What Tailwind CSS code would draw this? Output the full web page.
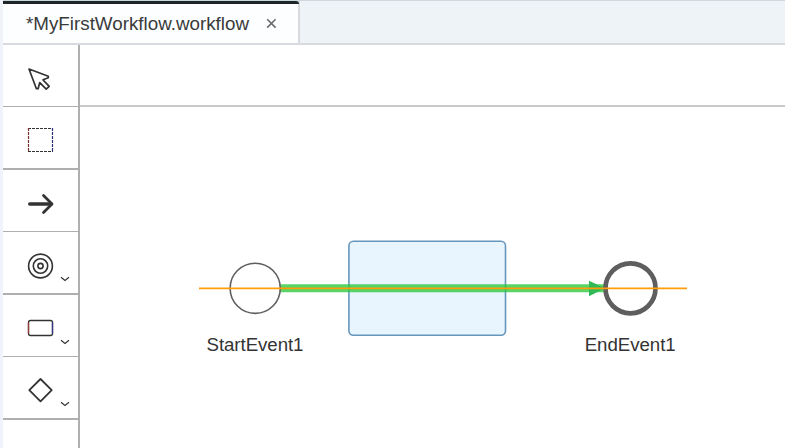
<!DOCTYPE html>
<html lang="en">
<head>
<meta charset="utf-8">
<title>Workflow editor</title>
<script src="https://cdn.jsdelivr.net/npm/@tailwindcss/browser@4"></script>
</head>
<body class="flex h-[448px] w-[785px] flex-col overflow-hidden bg-[#f0f3fa] pl-[3px] font-['Liberation_Sans',Arial,sans-serif] text-[#3a3a3a]">
  <header class="flex h-[45px] shrink-0 border-b-2 border-[#d8dadf] bg-[#edf3f7]">
    <div class="flex w-[297px] flex-col border-t border-r-2 border-t-[#c9d8dc] border-r-[#d8dadf] bg-[#fcfeff]">
      <div class="h-[3px] w-[296px] rounded-tr-sm bg-[#1d2529]"></div>
      <div class="flex flex-1 items-center pl-[23px]">
        <span class="w-[224px] text-[18.8px] leading-[39px] whitespace-nowrap">*MyFirstWorkflow.workflow</span>
        <svg class="ml-[16px]" width="11" height="11" viewBox="0 0 11 11" fill="none" stroke="#6b6b6b" stroke-width="1.6"><path d="M1.2 1.2l8.4 8.4M9.6 1.2l-8.4 8.4"/></svg>
      </div>
    </div>
    <div class="flex-1 border-t border-[#d0d8df]"></div>
  </header>
  <main class="flex min-h-0 flex-1 bg-white">
    <nav class="flex w-[77px] shrink-0 flex-col border-r-2 border-[#afafaf]">
      <button class="h-[62px] border-b border-[#afafaf]"><svg width="75" height="61" viewBox="3 45 75 61" fill="none" stroke="#333" stroke-width="1.7" stroke-linejoin="round"><path d="M29 69L48.3 76.3V77.8L43 79.8L49.2 86.3L46.2 89.2L39.8 82.6L38.1 88.7H36.4Z"/></svg></button>
      <button class="h-[63px] border-b-2 border-[#afafaf]"><svg width="75" height="61" viewBox="3 107 75 61" fill="none" stroke-width="1.2" stroke-dasharray="3 1"><path stroke="#333" d="M28 128.5H53M28 151.5H53"/><path stroke="#7b302e" d="M28.5 128V152"/><path stroke="#2c2c83" d="M52.5 128V152"/></svg></button>
      <button class="h-[62px] border-b border-[#afafaf]"><svg width="75" height="61" viewBox="3 170 75 61" fill="none" stroke="#333" stroke-linecap="round" stroke-linejoin="round"><path stroke-width="3.6" d="M29.8 204H51"/><path stroke-width="2.8" d="M43.5 195.5L52 204L43.5 212.5"/></svg></button>
      <button class="h-[63px] border-b-2 border-[#afafaf]"><svg width="75" height="61" viewBox="3 232 75 61" fill="none" stroke="#333" stroke-width="1.6"><circle cx="40.5" cy="266" r="11.9"/><circle cx="40.5" cy="266" r="7.2"/><circle cx="40.5" cy="266" r="2.6"/><path stroke-width="1.2" d="M61 277.3L65 280.5L69 277.3"/></svg></button>
      <button class="h-[62px] border-b border-[#afafaf]"><svg width="75" height="61" viewBox="3 295 75 61" fill="none" stroke="#333" stroke-width="1.3"><rect x="28.5" y="320.5" width="24" height="15" rx="2"/><path stroke="#913932" d="M28.5 322.5V333.5"/><path stroke="#353187" d="M52.5 322.5V333.5"/><path stroke-width="1.2" d="M61 340.3L65 343.5L69 340.3"/></svg></button>
      <button class="h-[63px] border-b-2 border-[#afafaf]"><svg width="75" height="61" viewBox="3 357 75 61" fill="none" stroke="#333"><path stroke-width="1.8" stroke-linejoin="round" d="M40.5 379L51.7 390.2L40.5 401.4L29.3 390.2Z"/><path stroke-width="1.2" d="M61 402.3L65 405.5L69 402.3"/></svg></button>
    </nav>
    <section class="flex min-w-0 flex-1 flex-col">
      <div class="h-[62px] shrink-0 border-b-2 border-[#c9c9c9]"></div>
      <svg width="705" height="341" viewBox="80 107 705 341" font-family="'Liberation Sans', Arial, sans-serif" font-size="18.7">
        <rect x="348.9" y="241.3" width="156.6" height="94" rx="4.5" fill="#e8f4fe" stroke="#6597bd" stroke-width="1.6"/>
        <path d="M280.5 288.3H605" stroke="#2ac83b" stroke-opacity=".78" stroke-width="8" fill="none"/>
        <path d="M589 280.7L605 288.3L589 296.3Z" fill="#30ba55"/>
        <circle cx="255.2" cy="288.3" r="25.1" fill="white" stroke="#5e5e5e" stroke-width="1.6"/>
        <circle cx="630.5" cy="288.3" r="25" fill="white" stroke="#5e5e5e" stroke-width="4.7"/>
        <path d="M199 288.4H687" stroke="#ff9e0a" stroke-width="1.8"/>
        <text x="206.5" y="350.5" textLength="97" fill="#333">StartEvent1</text>
        <text x="584.7" y="350.5" textLength="91" fill="#333">EndEvent1</text>
      </svg>
    </section>
  </main>
</body>
</html>
